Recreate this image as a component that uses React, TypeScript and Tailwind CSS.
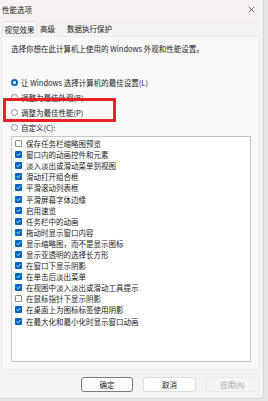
import React from 'react';

const font = { fontFamily: '"Noto Sans CJK SC", "Noto Sans", sans-serif' };

const radios = [
  { label: '让 Windows 选择计算机的最佳设置(L)', checked: true },
  { label: '调整为最佳外观(B)', checked: false },
  { label: '调整为最佳性能(P)', checked: false },
  { label: '自定义(C):', checked: false },
];

const effects: [string, boolean][] = [
  ['保存任务栏缩略图预览', false],
  ['窗口内的动画控件和元素', true],
  ['淡入淡出或滑动菜单到视图', true],
  ['滑动打开组合框', true],
  ['平滑滚动列表框', true],
  ['平滑屏幕字体边缘', true],
  ['启用速览', true],
  ['任务栏中的动画', true],
  ['拖动时显示窗口内容', true],
  ['显示缩略图，而不是显示图标', true],
  ['显示亚透明的选择长方形', true],
  ['在窗口下显示阴影', true],
  ['在单击后淡出菜单', true],
  ['在视图中淡入淡出或滑动工具提示', true],
  ['在鼠标指针下显示阴影', false],
  ['在桌面上为图标标签使用阴影', true],
  ['在最大化和最小化时显示窗口动画', true],
];

const Radio: React.FC<{ checked: boolean }> = ({ checked }) =>
  checked ? (
    <span className="w-[7px] h-[7px] rounded-full bg-[#0067c0] flex items-center justify-center shrink-0">
      <span className="w-[3px] h-[3px] rounded-full bg-white" />
    </span>
  ) : (
    <span className="w-[7px] h-[7px] rounded-full border border-[#8a8a8a] bg-white shrink-0" />
  );

const Check: React.FC<{ checked: boolean }> = ({ checked }) =>
  checked ? (
    <span className="w-[7px] h-[7px] rounded-[1px] bg-[#0067c0] flex items-center justify-center shrink-0">
      <svg width="5" height="5" viewBox="0 0 10 10" fill="none">
        <path d="M2 5.2 L4.2 7.4 L8.2 2.8" stroke="white" strokeWidth="1.6" strokeLinecap="round" strokeLinejoin="round" />
      </svg>
    </span>
  ) : (
    <span className="w-[7px] h-[7px] rounded-[1px] border border-[#8a8a8a] bg-white shrink-0" />
  );

export default function App() {
  return (
    <div className="w-[268px] h-[401px] bg-[#e6e6e6] overflow-hidden text-[#1b1b1b]" style={font}>
      <div className="w-[264px] h-[399px] bg-[#f3f3f3] border-r border-b border-[#d4d4d4] rounded-br-[4px] flex flex-col relative">
        {/* title bar */}
        <div className="h-[19px] bg-[#f9f2f2] flex items-center justify-between pl-[2px] pr-[8px] shrink-0">
          <span className="text-[7.5px] leading-[9px]">性能选项</span>
          <svg width="7" height="7" viewBox="0 0 10 10">
            <path d="M1 1 L9 9 M9 1 L1 9" stroke="#333" strokeWidth="1" />
          </svg>
        </div>

        {/* tabs */}
        <div className="h-[17px] flex items-end pl-[2px] text-[7.5px] leading-[9px] shrink-0">
          <div className="h-[15px] w-[35px] bg-[#f9f9f9] border-t border-l border-r border-[#e3e3e3] rounded-t-[2px] flex items-center justify-center">
            视觉效果
          </div>
          <div className="h-[15px] flex items-center pl-[3px]">高级</div>
          <div className="h-[15px] flex items-center pl-[12px]">数据执行保护</div>
        </div>

        {/* panel */}
        <div className="w-[258px] h-[334px] ml-[1px] bg-[#f9f9f9] border border-[#ebebeb] flex flex-col shrink-0">
          <div className="text-[7.5px] leading-[9px] pl-[9px] pt-[7px] h-[38px]">
            选择你想在此计算机上使用的 Windows 外观和性能设置。
          </div>
          <div className="flex flex-col pl-[9px]">
            {radios.map((r) => (
              <div key={r.label} className="h-[15px] flex items-center gap-[3px] text-[7.5px] leading-[9px]">
                <Radio checked={r.checked} />
                <span>{r.label}</span>
              </div>
            ))}
          </div>
          <div className="ml-[9px] mt-[1px] w-[240px] h-[226px] bg-white border border-[#c6c6c6] pt-[1px] pl-[3px] flex flex-col">
            {effects.map(([label, checked]) => (
              <div key={label} className="h-[11.1px] flex items-center gap-[4px] text-[7.5px] leading-[9px]">
                <Check checked={checked} />
                <span>{label}</span>
              </div>
            ))}
          </div>
        </div>

        {/* buttons */}
        <div className="flex justify-end gap-[10px] pr-[4px] pt-[7px] text-[7.5px] leading-[9px]">
          <button className="w-[52px] h-[15px] bg-[#fdfdfd] border border-[#7a7a7a] rounded-[3px] flex items-center justify-center">
            确定
          </button>
          <button className="w-[53px] h-[15px] bg-[#fdfdfd] border border-[#dcdcdc] rounded-[3px] flex items-center justify-center">
            取消
          </button>
          <button className="w-[53px] h-[15px] bg-[#f5f5f5] border border-[#e8e8e8] rounded-[3px] flex items-center justify-center text-[#a0a0a0]">
            应用(A)
          </button>
        </div>

        {/* red highlight annotation */}
        <div className="absolute left-[3px] top-[98px] w-[113px] h-[24px] border-[3px] border-[#e8202a] rounded-[1px]" />
      </div>
    </div>
  );
}
